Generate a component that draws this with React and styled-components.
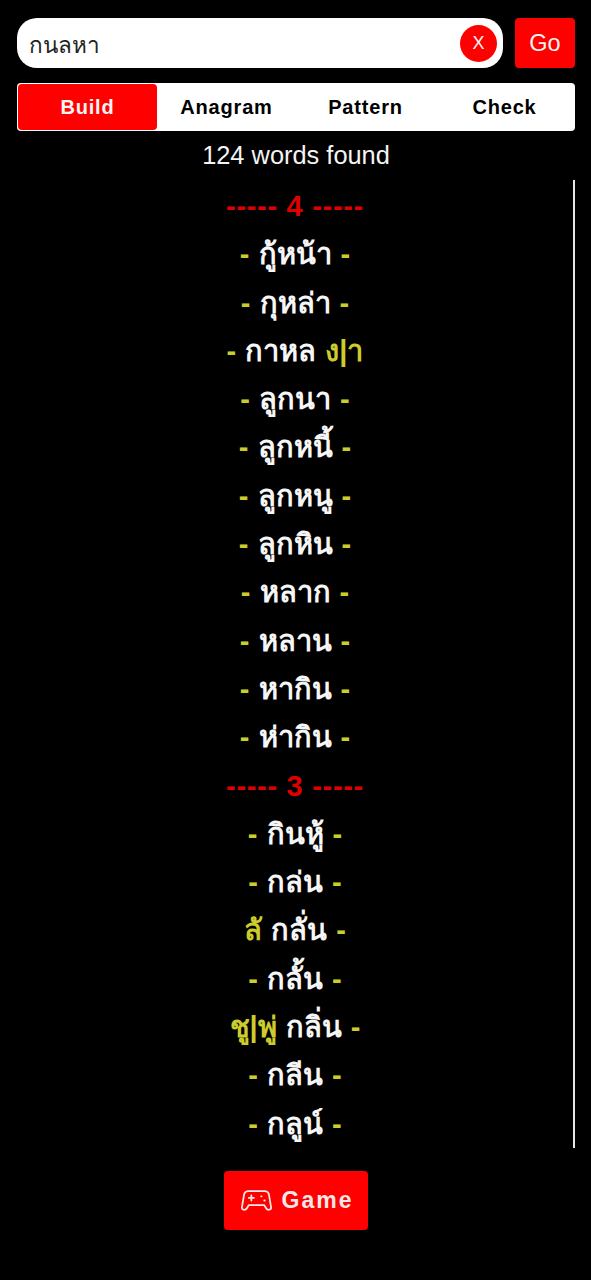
import React from 'react'
import styled, { createGlobalStyle } from 'styled-components'

const groups = [
  {
    size: 4,
    words: [
      ['', 'กู้หน้า', ''],
      ['', 'กุหล่า', ''],
      ['', 'กาหล', 'ง|า'],
      ['', 'ลูกนา', ''],
      ['', 'ลูกหนี้', ''],
      ['', 'ลูกหนู', ''],
      ['', 'ลูกหิน', ''],
      ['', 'หลาก', ''],
      ['', 'หลาน', ''],
      ['', 'หากิน', ''],
      ['', 'ห่ากิน', ''],
    ],
  },
  {
    size: 3,
    words: [
      ['', 'กินหู้', ''],
      ['', 'กล่น', ''],
      ['ลั', 'กลั่น', ''],
      ['', 'กลั้น', ''],
      ['ชู|พู่', 'กลิ่น', ''],
      ['', 'กลีน', ''],
      ['', 'กลูน์', ''],
    ],
  },
]

const GameIcon = () => (
  <svg width="31" height="21" viewBox="0 0 30 20" fill="none" stroke="currentColor" strokeWidth="1.7" strokeLinejoin="round" strokeLinecap="round">
    <path d="M7 1H23Q26 1 27 4L29 16Q29.5 19 27 19Q25 19 24 17L22.5 14.5H7.5L6 17Q5 19 3 19Q.5 19 1 16L3 4Q4 1 7 1Z" />
    <path d="M10 5V10M7.5 7.5H12.5" />
    <path d="M19.5 6H20M22.5 10H23" />
  </svg>
)

const App = () => {
  return (
    <Page>
      <GlobalStyle />
      <SearchRow>
        <SearchBox>
          <SearchText>กนลหา</SearchText>
          <ClearButton>X</ClearButton>
        </SearchBox>
        <GoButton>Go</GoButton>
      </SearchRow>
      <Tabs>
        <Tab $active>Build</Tab>
        <Tab>Anagram</Tab>
        <Tab>Pattern</Tab>
        <Tab>Check</Tab>
      </Tabs>
      <Count>124 words found</Count>
      <WordList>
        {groups.map((group) => (
          <React.Fragment key={group.size}>
            <GroupHead>----- {group.size} -----</GroupHead>
            {group.words.map(([before, word, after]) => (
              <Word key={word}>
                <Hook>{before || '-'}</Hook> {word} <Hook>{after || '-'}</Hook>
              </Word>
            ))}
          </React.Fragment>
        ))}
      </WordList>
      <Footer>
        <GameButton>
          <GameIcon />
          Game
        </GameButton>
      </Footer>
    </Page>
  )
}

const GlobalStyle = createGlobalStyle`
  body {
    margin: 0;
    background: #000;
    font-family: "Liberation Sans", "Noto Sans", sans-serif;
  }
`

const Page = styled.div`
  height: 1280px;
  box-sizing: border-box;
  padding: 18px 16px 0 17px;
  display: flex;
  flex-direction: column;
  overflow: hidden;
`

const SearchRow = styled.div`
  display: flex;
  gap: 12px;
  height: 50px;
`

const SearchBox = styled.div`
  flex: 1;
  background: #fff;
  border-radius: 20px;
  display: flex;
  align-items: center;
  justify-content: space-between;
  padding: 0 6px 0 12px;
`

const SearchText = styled.span`
  color: #222;
  font-size: 22.5px;
  padding-top: 3px;
`

const ClearButton = styled.span`
  width: 37px;
  height: 37px;
  border-radius: 50%;
  background: #f00;
  color: #f4f4f4;
  font-size: 18px;
  display: flex;
  align-items: center;
  justify-content: center;
`

const GoButton = styled.div`
  width: 60px;
  background: #f00;
  border-radius: 4px;
  color: #f4f4f4;
  font-size: 23.5px;
  display: flex;
  align-items: center;
  justify-content: center;
`

const Tabs = styled.div`
  margin-top: 15px;
  height: 48px;
  box-sizing: border-box;
  padding: 1px;
  background: #fff;
  border-radius: 4px;
  display: grid;
  grid-template-columns: repeat(4, 1fr);
`

const Tab = styled.div`
  display: flex;
  align-items: center;
  justify-content: center;
  border-radius: 4px;
  font-size: 20px;
  font-weight: 700;
  letter-spacing: 0.8px;
  color: ${(p) => (p.$active ? '#f4f4f4' : '#000')};
  background: ${(p) => (p.$active ? '#f00' : 'transparent')};
`

const Count = styled.div`
  height: 49px;
  line-height: 49px;
  text-align: center;
  color: #f4f4f4;
  font-size: 25.4px;
`

const WordList = styled.div`
  height: 968px;
  border-right: 2px solid #e8e8e8;
  overflow: hidden;
  text-align: center;
`

const GroupHead = styled.div`
  height: 48.3px;
  line-height: 52px;
  color: #dc0000;
  font-size: 29px;
  font-weight: 700;
  letter-spacing: 0.7px;
`

const Word = styled.div`
  height: 48.3px;
  line-height: 52px;
  color: #f6f6f6;
  font-size: 29px;
  font-weight: 700;
  word-spacing: 1px;
  white-space: nowrap;
`

const Hook = styled.span`
  color: #cccc2c;
`

const Footer = styled.div`
  display: flex;
  justify-content: center;
  margin-top: 23px;
`

const GameButton = styled.div`
  width: 144px;
  height: 59px;
  box-sizing: border-box;
  padding-left: 2px;
  background: #f00;
  border-radius: 4px;
  color: #f6e8e8;
  font-size: 23px;
  font-weight: 700;
  letter-spacing: 2px;
  display: flex;
  align-items: center;
  justify-content: center;
  gap: 10px;
`

export default App
